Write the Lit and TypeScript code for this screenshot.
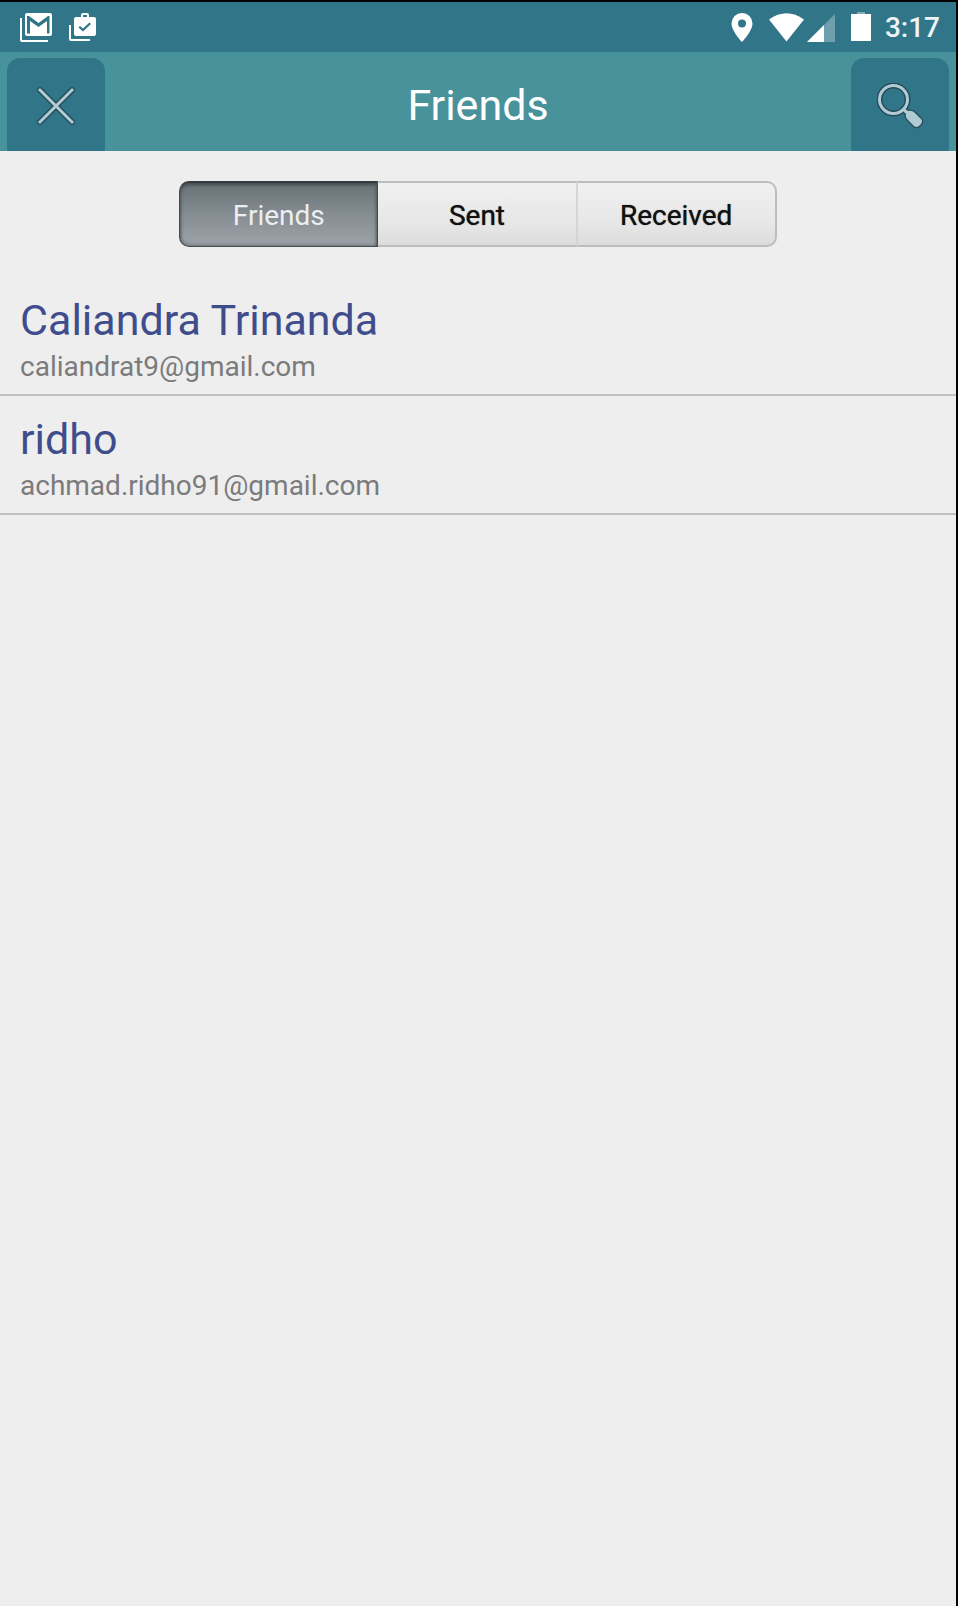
import { LitElement, html, css } from "lit";
import { customElement, property, state } from "lit/decorators.js";

interface Person {
  name: string;
  email: string;
}

@customElement("status-bar")
class StatusBar extends LitElement {
  static styles = css`
    :host {
      display: flex;
      justify-content: space-between;
      align-items: center;
      height: 50px;
      padding: 1px 16px 0 20px;
      box-sizing: border-box;
      background: #317589;
      color: #eef4f5;
    }
    .group {
      display: flex;
      align-items: center;
    }
    .left {
      gap: 16px;
    }
    .icon {
      display: block;
      fill: #fff;
    }
    .pin {
      margin-right: 16px;
    }
    .cell {
      margin: 0 16px 0 3px;
    }
    .battery {
      margin-right: 14px;
    }
    .time {
      font-size: 28px;
      line-height: 32px;
      font-weight: 500;
    }
  `;

  render() {
    return html`
      <div class="group left">
        <svg class="icon" width="32" height="30" viewBox="0 0 32 30" aria-hidden="true">
          <path d="M0 5h2v22h26v2H2q-2 0-2-2z" />
          <path
            fill-rule="evenodd"
            d="M7 0h23q2 0 2 2v19q0 2-2 2H7q-2 0-2-2V2q0-2 2-2zM7 20.500h3V8L18.500 14 27 8V20.500H29.500V3H28L18.500 10 9 3H7z"
          />
        </svg>
        <svg class="icon" width="29" height="30" viewBox="0 0 29 30" aria-hidden="true">
          <path d="M1 12h2v14h19v2H3q-2 0-2-2z" />
          <path
            fill-rule="evenodd"
            d="M8 4h5V2q0-2 2-2h4q2 0 2 2v2h5q2 0 2 2v15q0 2-2 2H8q-2 0-2-2V6q0-2 2-2zM15 4h4V2h-4zM12 13l-1.500 1.500 4.500 4 8-7.500-1.500-1.500L15 15.500z"
          />
        </svg>
      </div>
      <div class="group">
        <svg class="icon pin" width="22" height="30" viewBox="0 0 22 30" aria-hidden="true">
          <path
            fill-rule="evenodd"
            d="M11 0a10.500 10.500 0 0 1 10.500 10.500C21.500 18 11 29 11 29S.500 18 .500 10.500A10.500 10.500 0 0 1 11 0zM11 6.500a4 4 0 1 0 0 8 4 4 0 0 0 0-8z"
          />
        </svg>
        <svg class="icon" width="35" height="30" viewBox="0 0 35 30" aria-hidden="true">
          <path d="M0 6.500Q17.500-6 35 6.500L17.500 28.500z" />
        </svg>
        <svg class="icon cell" width="28" height="30" viewBox="0 0 28 30" aria-hidden="true">
          <path d="M28 1v28H0z" opacity=".3" />
          <path d="M17 12v17H0z" />
        </svg>
        <svg class="icon battery" width="20" height="32" viewBox="0 0 20 32" aria-hidden="true">
          <path d="M6 0h8v3H6z" opacity=".4" />
          <path d="M0 2h20v27H0z" />
        </svg>
        <span class="time">3:17</span>
      </div>
    `;
  }
}

@customElement("title-bar")
class TitleBar extends LitElement {
  @property() heading = "";

  static styles = css`
    :host {
      display: grid;
      grid-template-columns: 98px 1fr 98px;
      align-items: end;
      height: 99px;
      padding: 0 7px;
      box-sizing: border-box;
      background: #48929b;
    }
    .heading {
      margin: 0 0 20px;
      text-align: center;
      font-size: 43px;
      line-height: 52px;
      font-weight: 400;
      color: #fff;
    }
    .action {
      display: grid;
      place-items: center;
      height: 93px;
      padding: 2px 0 0;
      border: 0;
      border-radius: 13px 13px 0 0;
      background: #317589;
      cursor: pointer;
    }
    .glyph {
      display: block;
      fill: none;
    }
    .edge {
      stroke: #244c5a;
      stroke-linecap: round;
    }
    .line {
      stroke: #b1cbd3;
      stroke-linecap: square;
    }
    .grip {
      fill: #b1cbd3;
    }
  `;

  render() {
    return html`
      <button class="action" aria-label="Close">
        <svg class="glyph" width="40" height="40" viewBox="0 0 40 40">
          <path class="edge" stroke-width="6" d="M4 4l32 32M36 4L4 36" />
          <path class="line" stroke-width="3" d="M4 4l32 32M36 4L4 36" />
        </svg>
      </button>
      <h1 class="heading">${this.heading}</h1>
      <button class="action" aria-label="Search">
        <svg class="glyph" width="46" height="46" viewBox="0 0 46 46">
          <circle class="edge" stroke-width="6" cx="16.500" cy="16.500" r="14" />
          <path
            class="edge"
            stroke-width="2.500"
            d="M25 27l2-2 4 3q4-1 7 2l6 6q2 2 0 5l-2 2q-3 2-5 0l-6-6q-3-3-2-6z"
          />
          <circle class="line" stroke-width="3" cx="16.500" cy="16.500" r="14" />
          <path class="grip" d="M25 27l2-2 4 3q4-1 7 2l6 6q2 2 0 5l-2 2q-3 2-5 0l-6-6q-3-3-2-6z" />
        </svg>
      </button>
    `;
  }
}

@customElement("segment-control")
class SegmentControl extends LitElement {
  @property({ attribute: false }) options: string[] = [];
  @state() private selected = 0;

  static styles = css`
    :host {
      display: grid;
      grid-template-columns: repeat(3, 1fr);
      width: 62.500%;
      height: 66px;
    }
    .segment {
      box-sizing: border-box;
      padding: 3px 0 0;
      border: 2px solid #bdbdbd;
      border-left-width: 0;
      border-right-color: #d5d5d5;
      background: linear-gradient(#f0f0f0, #e7e7e7 65%, #dcdcdc);
      font: 400 28px/32px Roboto, sans-serif;
      color: #111;
      text-shadow: 0 0 1px #333;
      cursor: pointer;
    }
    .segment:first-child {
      border-radius: 10px 0 0 10px;
    }
    .segment:last-child {
      border-right-color: #bdbdbd;
      border-radius: 0 10px 10px 0;
    }
    .segment[aria-pressed="true"] {
      border: 1px solid #444c50;
      border-top: 2px solid #343b3f;
      background: linear-gradient(#687175, #858d92 50%, #9ca4aa);
      box-shadow: inset 0 2px 3px #454d51, inset 0 0 4px #50585c;
      color: #eceeef;
      text-shadow: none;
    }
  `;

  render() {
    return this.options.map(
      (label, i) => html`
        <button
          class="segment"
          aria-pressed=${i === this.selected ? "true" : "false"}
          @click=${() => (this.selected = i)}
        >
          ${label}
        </button>
      `
    );
  }
}

@customElement("app-root")
class AppRoot extends LitElement {
  private people: Person[] = [
    { name: "Caliandra Trinanda", email: "caliandrat9@gmail.com" },
    { name: "ridho", email: "achmad.ridho91@gmail.com" },
  ];

  static styles = css`
    :host {
      display: block;
      box-sizing: border-box;
      min-height: 100vh;
      border: solid #000;
      border-width: 2px 2px 0 0;
      background: #eee;
      font-family: Roboto, sans-serif;
    }
    .tabs {
      display: flex;
      justify-content: center;
      padding: 30px 0;
    }
    .people {
      margin: 0;
      padding: 0;
      list-style: none;
    }
    .person {
      padding: 17px 20px 6px;
      border-bottom: 2px solid #c0c0c0;
    }
    .name {
      font-size: 43px;
      line-height: 52px;
      color: #3f4d8c;
    }
    .email {
      font-size: 28px;
      line-height: 42px;
      color: #7b7b7b;
    }
  `;

  render() {
    return html`
      <status-bar></status-bar>
      <title-bar heading="Friends"></title-bar>
      <div class="tabs">
        <segment-control .options=${["Friends", "Sent", "Received"]}></segment-control>
      </div>
      <ul class="people">
        ${this.people.map(
          (p) => html`
            <li class="person">
              <div class="name">${p.name}</div>
              <div class="email">${p.email}</div>
            </li>
          `
        )}
      </ul>
    `;
  }
}
